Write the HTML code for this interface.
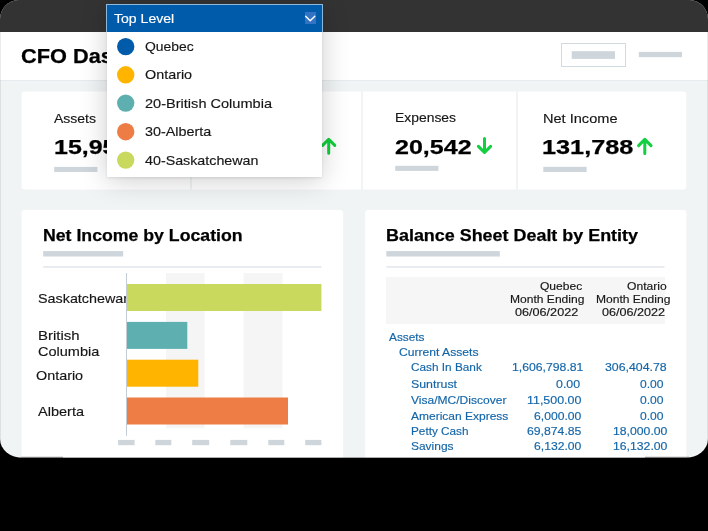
<!DOCTYPE html>
<html lang="en">
<head>
<meta charset="utf-8">
<title>CFO Dashboard</title>
<style>
html,body{margin:0;padding:0;background:#000;}
body{width:708px;height:531px;position:relative;overflow:hidden;font-family:"Liberation Sans",sans-serif;}
.frame{position:absolute;left:0;top:0;width:708px;height:458px;background:#f1f4f5;border-radius:19px 19px 23px 23px / 19px 19px 19px 19px;overflow:hidden;}
.topbar{position:absolute;left:0;top:0;width:708px;height:32px;background:#333333;}
.header{position:absolute;left:0;top:32px;width:708px;height:48px;background:#fff;border-bottom:1px solid #e5ebee;box-sizing:content-box;}
.btn{position:absolute;left:561px;top:43px;width:63px;height:22px;border:1px solid #cfdae1;background:#fff;}
.vdiv{position:absolute;top:91px;width:2px;height:99px;background:#f1f4f5;}
.t{position:absolute;white-space:pre;transform-origin:0 50%;will-change:transform;-webkit-text-stroke:0.16px currentColor;}
.t.b{-webkit-text-stroke:0.25px currentColor;}
.thead{position:absolute;left:386px;top:277px;width:278.5px;height:46.5px;background:#f6f6f6;}
svg{position:absolute;left:0;top:0;overflow:visible;}
.dd{position:absolute;left:107px;top:5px;width:215.4px;height:172px;box-shadow:0 1px 3px rgba(0,0,0,0.10),0 3px 26px rgba(0,0,0,0.20);}
.ddhead{position:absolute;left:106.4px;top:4px;width:214.4px;height:26.5px;background:#005baa;border:1px solid #8db8dc;border-bottom:none;}
.ddpanel{position:absolute;left:107px;top:31.5px;width:215.4px;height:145.5px;background:#fff;}
.chev{position:absolute;left:305px;top:12.3px;width:10.6px;height:11.6px;background:#3273c3;}
.edge{position:absolute;left:21px;top:456px;width:42px;height:2px;background:linear-gradient(to bottom,rgba(0,0,0,0.10) 50%,rgba(0,0,0,0.30) 50%);}
.botaa{position:absolute;left:0;top:457px;width:708px;height:1px;background:rgba(0,0,0,0.32);}
</style>
</head>
<body>
<div class="frame">
  <div class="topbar"></div>
  <div class="header"></div>
  <div class="btn"></div>

  <!-- KPI strip -->
  <svg width="708" height="460" viewBox="0 0 708 460">
    <g fill="#fff">
      <rect x="21.6" y="91.6" width="664.6" height="97.8" rx="3.2"/>
      <rect x="21.6" y="210" width="321.5" height="260" rx="3.2"/>
      <rect x="365.1" y="210" width="321.2" height="260" rx="3.2"/>
    </g>
  </svg>
  <div class="vdiv" style="left:190px;"></div>
  <div class="vdiv" style="left:361px;"></div>
  <div class="vdiv" style="left:516px;"></div>

  <!-- Chart panel -->
  <svg width="708" height="457" viewBox="0 0 708 457">
    <rect x="166" y="273" width="38.6" height="155.2" fill="#f5f5f6"/>
    <rect x="243.6" y="273" width="38.9" height="155.2" fill="#f5f5f6"/>
  </svg>

  <!-- Table panel -->
  <div class="thead"></div>
  <svg width="708" height="457" viewBox="0 0 708 457">
    <g fill="#ced6dc">
      <rect x="571.7" y="51.2" width="43.3" height="7.7"/>
      <rect x="638.8" y="51.9" width="43.2" height="5.3"/>
      <rect x="54.2" y="166.9" width="43.2" height="5.1"/>
      <rect x="395.2" y="165.8" width="43.2" height="5.1"/>
      <rect x="543.3" y="166.8" width="43.3" height="5.2"/>
      <rect x="43.2" y="251.1" width="80" height="5.4"/>
      <rect x="386.3" y="251.1" width="113.5" height="5.4"/>
    </g>
    <g fill="#e1e7eb">
      <rect x="43.2" y="266.2" width="278.2" height="1.5"/>
      <rect x="386.3" y="266.2" width="278.2" height="1.5"/>
    </g>
  </svg>

<span class="t b" style="left:21.2px;top:43px;font-size:20.6px;line-height:25px;color:#000;transform:scaleX(1.0568);font-weight:700">CFO Dashboard</span>
<span class="t" style="left:54.2px;top:111px;font-size:13.5px;line-height:16px;color:#161616;transform:scaleX(1.0366)">Assets</span>
<span class="t b" style="left:54.4px;top:135px;font-size:20.2px;line-height:24px;color:#000;transform:scaleX(1.2367);font-weight:700">15,953,802</span>
<span class="t" style="left:395.3px;top:110px;font-size:13.5px;line-height:16px;color:#161616;transform:scaleX(1.0287)">Expenses</span>
<span class="t b" style="left:395.0px;top:135px;font-size:20.2px;line-height:24px;color:#000;transform:scaleX(1.2405);font-weight:700">20,542</span>
<span class="t" style="left:542.5px;top:111px;font-size:13.5px;line-height:16px;color:#161616;transform:scaleX(1.0792)">Net Income</span>
<span class="t b" style="left:542.3px;top:135px;font-size:20.2px;line-height:24px;color:#000;transform:scaleX(1.2510);font-weight:700">131,788</span>
<span class="t b" style="left:42.7px;top:225px;font-size:16.3px;line-height:20px;color:#000;transform:scaleX(1.0868);font-weight:700">Net Income by Location</span>
<span class="t b" style="left:385.6px;top:225px;font-size:16.3px;line-height:20px;color:#000;transform:scaleX(1.1008);font-weight:700">Balance Sheet Dealt by Entity</span>
<span class="t clip" style="left:38.4px;top:291px;font-size:13.5px;line-height:16px;color:#161616;transform:scaleX(1.0625)">Saskatchewan</span>
<span class="t" style="left:38.4px;top:328px;font-size:13.5px;line-height:16px;color:#161616;transform:scaleX(1.1062)">British</span>
<span class="t" style="left:38.4px;top:344px;font-size:13.5px;line-height:16px;color:#161616;transform:scaleX(1.0748)">Columbia</span>
<span class="t" style="left:36.4px;top:368px;font-size:13.5px;line-height:16px;color:#161616;transform:scaleX(1.0637)">Ontario</span>
<span class="t" style="left:38.4px;top:404px;font-size:13.5px;line-height:16px;color:#161616;transform:scaleX(1.0752)">Alberta</span>
<span class="t" style="left:539.6px;top:279px;font-size:11.4px;line-height:14px;color:#161616;transform:scaleX(1.0575)">Quebec</span>
<span class="t" style="left:510.3px;top:292px;font-size:11.4px;line-height:14px;color:#161616;transform:scaleX(1.0584)">Month Ending</span>
<span class="t" style="left:515.4px;top:305px;font-size:11.4px;line-height:14px;color:#161616;transform:scaleX(1.1085)">06/06/2022</span>
<span class="t" style="left:626.5px;top:279px;font-size:11.4px;line-height:14px;color:#161616;transform:scaleX(1.0627)">Ontario</span>
<span class="t" style="left:596.3px;top:292px;font-size:11.4px;line-height:14px;color:#161616;transform:scaleX(1.0584)">Month Ending</span>
<span class="t" style="left:602.4px;top:305px;font-size:11.4px;line-height:14px;color:#161616;transform:scaleX(1.1067)">06/06/2022</span>
<span class="t" style="left:389.2px;top:330px;font-size:11.4px;line-height:14px;color:#1466a8;transform:scaleX(1.0384)">Assets</span>
<span class="t" style="left:399.2px;top:345px;font-size:11.4px;line-height:14px;color:#1466a8;transform:scaleX(1.0642)">Current Assets</span>
<span class="t" style="left:411.1px;top:360px;font-size:11.4px;line-height:14px;color:#1466a8;transform:scaleX(1.0352)">Cash In Bank</span>
<span class="t" style="left:512.3px;top:360px;font-size:11.4px;line-height:14px;color:#1466a8;transform:scaleX(1.0734)">1,606,798.81</span>
<span class="t" style="left:605.2px;top:360px;font-size:11.4px;line-height:14px;color:#1466a8;transform:scaleX(1.0822)">306,404.78</span>
<span class="t" style="left:411.1px;top:377px;font-size:11.4px;line-height:14px;color:#1466a8;transform:scaleX(1.0843)">Suntrust</span>
<span class="t" style="left:555.8px;top:377px;font-size:11.4px;line-height:14px;color:#1466a8;transform:scaleX(1.0870)">0.00</span>
<span class="t" style="left:640.1px;top:377px;font-size:11.4px;line-height:14px;color:#1466a8;transform:scaleX(1.0599)">0.00</span>
<span class="t" style="left:411.1px;top:393px;font-size:11.4px;line-height:14px;color:#1466a8;transform:scaleX(1.0563)">Visa/MC/Discover</span>
<span class="t" style="left:527.3px;top:393px;font-size:11.4px;line-height:14px;color:#1466a8;transform:scaleX(1.0918)">11,500.00</span>
<span class="t" style="left:640.1px;top:393px;font-size:11.4px;line-height:14px;color:#1466a8;transform:scaleX(1.0599)">0.00</span>
<span class="t" style="left:411.1px;top:409px;font-size:11.4px;line-height:14px;color:#1466a8;transform:scaleX(1.0528)">American Express</span>
<span class="t" style="left:534.4px;top:409px;font-size:11.4px;line-height:14px;color:#1466a8;transform:scaleX(1.0667)">6,000.00</span>
<span class="t" style="left:640.1px;top:409px;font-size:11.4px;line-height:14px;color:#1466a8;transform:scaleX(1.0599)">0.00</span>
<span class="t" style="left:411.1px;top:424px;font-size:11.4px;line-height:14px;color:#1466a8;transform:scaleX(1.0320)">Petty Cash</span>
<span class="t" style="left:527.3px;top:424px;font-size:11.4px;line-height:14px;color:#1466a8;transform:scaleX(1.0732)">69,874.85</span>
<span class="t" style="left:612.5px;top:424px;font-size:11.4px;line-height:14px;color:#1466a8;transform:scaleX(1.0732)">18,000.00</span>
<span class="t" style="left:411.1px;top:439px;font-size:11.4px;line-height:14px;color:#1466a8;transform:scaleX(1.0486)">Savings</span>
<span class="t" style="left:534.4px;top:439px;font-size:11.4px;line-height:14px;color:#1466a8;transform:scaleX(1.0667)">6,132.00</span>
<span class="t" style="left:612.5px;top:439px;font-size:11.4px;line-height:14px;color:#1466a8;transform:scaleX(1.0732)">16,132.00</span>

  <svg width="708" height="457" viewBox="0 0 708 457">
    <rect x="126" y="273" width="1" height="162.8" fill="#c3ccd4"/>
    <rect x="127" y="284" width="194.4" height="27" fill="#c9d95d"/>
    <rect x="127" y="321.9" width="60.3" height="27" fill="#5eb0b0"/>
    <rect x="127" y="359.7" width="71.3" height="27" fill="#ffb400"/>
    <rect x="127" y="397.5" width="161" height="27" fill="#ed7d45"/>
    <g fill="#ced6dc">
      <rect x="118.1" y="439.9" width="16.5" height="5.3"/>
      <rect x="155.3" y="439.9" width="16" height="5.3"/>
      <rect x="192.2" y="439.9" width="17" height="5.3"/>
      <rect x="230.3" y="439.9" width="17" height="5.3"/>
      <rect x="268.3" y="439.9" width="16" height="5.3"/>
      <rect x="305.2" y="439.9" width="16.2" height="5.3"/>
    </g>
  </svg>

  <svg width="708" height="457" viewBox="0 0 708 457" fill="none" stroke="#11cf3e" stroke-width="3" stroke-linecap="round" stroke-linejoin="round">
    <path d="M328.7 153.2V139.3M322.6 145.4L328.7 139.3L334.8 145.4"/>
    <path d="M484.5 138.6V152.5M478.4 146.4L484.5 152.5L490.6 146.4"/>
    <path d="M644.8 153.6V139.4M638.6 145.6L644.8 139.4L651 145.6"/>
  </svg>

  <!-- dropdown -->
  <div class="dd"></div>
  <div class="ddhead"></div>
  <div class="ddpanel"></div>
  <div class="chev"></div>
  <svg width="708" height="457" viewBox="0 0 708 457" fill="none" stroke="#fff" stroke-width="1.4" stroke-linecap="round" stroke-linejoin="round">
    <path d="M305.6 16.2L310.2 20.7L314.8 16.2"/>
  </svg>
  <svg width="708" height="457" viewBox="0 0 708 457">
    <circle cx="125.7" cy="46.6" r="8.7" fill="#005baa"/>
    <circle cx="125.7" cy="74.8" r="8.7" fill="#ffb400"/>
    <circle cx="125.7" cy="103.1" r="8.7" fill="#5eb0b0"/>
    <circle cx="125.7" cy="131.7" r="8.7" fill="#ed7d45"/>
    <circle cx="125.7" cy="160.1" r="8.7" fill="#c9d95d"/>
  </svg>
<span class="t" style="left:114.2px;top:11px;font-size:13.5px;line-height:16px;color:#fff;transform:scaleX(1.0416)">Top Level</span>
<span class="t" style="left:145.2px;top:39px;font-size:13.5px;line-height:16px;color:#161616;transform:scaleX(1.0297)">Quebec</span>
<span class="t" style="left:145.2px;top:67px;font-size:13.5px;line-height:16px;color:#161616;transform:scaleX(1.0637)">Ontario</span>
<span class="t" style="left:145.2px;top:96px;font-size:13.5px;line-height:16px;color:#161616;transform:scaleX(1.0781)">20-British Columbia</span>
<span class="t" style="left:145.2px;top:124px;font-size:13.5px;line-height:16px;color:#161616;transform:scaleX(1.0643)">30-Alberta</span>
<span class="t" style="left:145.2px;top:153px;font-size:13.5px;line-height:16px;color:#161616;transform:scaleX(1.0575)">40-Saskatchewan</span>
  <div style="position:absolute;left:0;top:32px;width:1px;height:425px;background:rgba(0,0,0,0.08);"></div>
  <div style="position:absolute;left:707px;top:32px;width:1px;height:425px;background:rgba(0,0,0,0.08);"></div>
  <div class="edge"></div>
  <div class="edge" style="left:645px;width:44px;"></div>
  <div class="botaa"></div>
</div>
</body>
</html>
